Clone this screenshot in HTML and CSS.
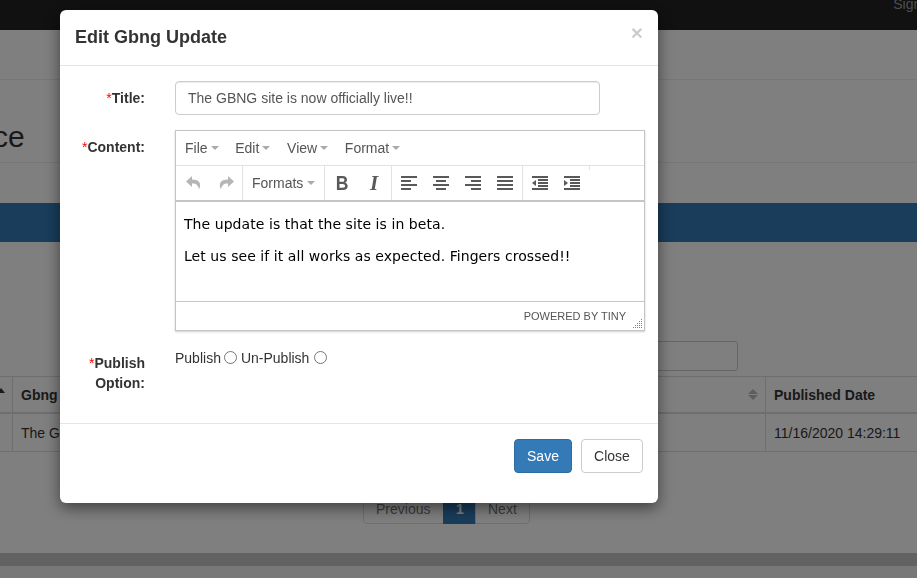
FILE: index.html
```html
<!DOCTYPE html>
<html lang="en">
<head>
<meta charset="utf-8">
<title>Edit Gbng Update</title>
<link rel="stylesheet" href="styles.css">
</head>
<body>
<div class="page">
  <div class="topbar"><a class="signin">Sign in</a></div>
  <div class="subnav"></div>
  <div class="page-head"><h2 class="page-title">ce</h2></div>
  <div class="band"></div>
  <div class="search-row"><div class="search-box"></div></div>
  <div class="tbl">
    <div class="tr tr-head">
      <div class="td td-a"><span class="sort-up"></span></div>
      <div class="td td-b">Gbng Update Title</div>
      <div class="td td-c"><span class="sort-both"></span></div>
      <div class="td td-d">Published Date</div>
    </div>
    <div class="tr">
      <div class="td td-a"></div>
      <div class="td td-b">The GBNG site is now officially live!!</div>
      <div class="td td-c"></div>
      <div class="td td-d">11/16/2020 14:29:11</div>
    </div>
  </div>
  <div class="pager">
    <a class="pg pg-first">Previous</a><a class="pg pg-on">1</a><a class="pg pg-last">Next</a>
  </div>
  <div class="hscroll"></div>
</div>

<div class="backdrop"></div>

<div class="modal">
  <div class="modal-header">
    <h4 class="modal-title">Edit Gbng Update</h4>
    <span class="close-x">×</span>
  </div>
  <div class="modal-body">
    <div class="form-row row-title">
      <label class="lbl"><span class="req">*</span>Title:</label>
      <input class="text-input" type="text" value="The GBNG site is now officially live!!">
    </div>
    <div class="form-row row-content">
      <label class="lbl"><span class="req">*</span>Content:</label>
      <div class="editor">
        <div class="menubar">
          <span class="menu">File<i class="caret"></i></span>
          <span class="menu">Edit<i class="caret"></i></span>
          <span class="menu">View<i class="caret"></i></span>
          <span class="menu">Format<i class="caret"></i></span>
        </div>
        <div class="toolbar">
          <div class="group group-first">
            <span class="tb off"><svg class="ico" viewBox="0 0 16 16"><path d="M6 1 0 6.500 6 12V8.600c3.800-.3 6.200 1.400 7 6 2.600-6 1-10-7-10.200z"/></svg></span>
            <span class="tb off"><svg class="ico" viewBox="0 0 16 16"><path d="M10 1l6 5.500L10 12V8.600c-3.800-.3-6.200 1.400-7 6-2.600-6-1-10 7-10.200z"/></svg></span>
          </div>
          <div class="group group-formats">
            <span class="formats">Formats<i class="caret caret-wide"></i></span>
          </div>
          <div class="group">
            <span class="tb glyph-b">B</span>
            <span class="tb glyph-i">I</span>
          </div>
          <div class="group">
            <span class="tb"><svg class="ico" viewBox="0 0 16 16"><path d="M0 1h16v2H0zM0 5h10v2H0zM0 9h16v2H0zM0 13h10v2H0z"/></svg></span>
            <span class="tb"><svg class="ico" viewBox="0 0 16 16"><path d="M0 1h16v2H0zM3 5h10v2H3zM0 9h16v2H0zM3 13h10v2H3z"/></svg></span>
            <span class="tb"><svg class="ico" viewBox="0 0 16 16"><path d="M0 1h16v2H0zM6 5h10v2H6zM0 9h16v2H0zM6 13h10v2H6z"/></svg></span>
            <span class="tb"><svg class="ico" viewBox="0 0 16 16"><path d="M0 1h16v2H0zM0 5h16v2H0zM0 9h16v2H0zM0 13h16v2H0z"/></svg></span>
          </div>
          <div class="group">
            <span class="tb"><svg class="ico" viewBox="0 0 16 16"><path d="M0 1h16v2H0zM6 4h10v2H6zM6 7h10v2H6zM6 10h10v2H6zM0 13h16v2H0zM4 5v6L0 8z"/></svg></span>
            <span class="tb"><svg class="ico" viewBox="0 0 16 16"><path d="M0 1h16v2H0zM6 4h10v2H6zM6 7h10v2H6zM6 10h10v2H6zM0 13h16v2H0zM0 5v6l4-3z"/></svg></span>
          </div>
          <div class="group group-tick"></div>
        </div>
        <div class="edit-area">
          <p class="edit-p">The update is that the site is in beta.</p>
          <p class="edit-p">Let us see if it all works as expected. Fingers crossed!!</p>
        </div>
        <div class="statusbar">
          <span class="powered">POWERED BY TINY</span>
          <svg class="grip" viewBox="0 0 9 9"><path d="M8 0h1v1H8zM6 2h1v1H6zM8 2h1v1H8zM4 4h1v1H4zM6 4h1v1H6zM8 4h1v1H8zM2 6h1v1H2zM4 6h1v1H4zM6 6h1v1H6zM8 6h1v1H8zM0 8h1v1H0zM2 8h1v1H2zM4 8h1v1H4zM6 8h1v1H6zM8 8h1v1H8z"/></svg>
        </div>
      </div>
    </div>
    <div class="form-row row-publish">
      <label class="lbl"><span class="req">*</span>Publish<br>Option:</label>
      <div class="radios">
        <span>Publish</span><input class="radio" type="radio" name="pub">
        <span>Un-Publish</span><input class="radio radio-last" type="radio" name="pub">
      </div>
    </div>
  </div>
  <div class="modal-footer">
    <button class="btn btn-primary" type="button">Save</button>
    <button class="btn btn-default" type="button">Close</button>
  </div>
</div>
</body>
</html>
```

FILE: styles.css
```css
* { box-sizing: border-box; }
html, body { margin: 0; height: 100%; overflow: hidden; }
body {
  font-family: "Liberation Sans", Arial, sans-serif;
  font-size: 14px;
  line-height: 20px;
  color: #333;
  background: #fff;
}

/* page behind the dialog */
.page { width: 917px; height: 578px; overflow: hidden; display: flex; flex-direction: column; }
.topbar { height: 30px; background: #222; display: flex; justify-content: flex-end; flex: none; }
.signin { color: #9d9d9d; margin-right: -19px; margin-top: -6px; font-size: 14px; }
.subnav { height: 50px; border-bottom: 1px solid #eee; flex: none; }
.page-head { height: 83px; border-bottom: 1px solid #eee; flex: none; display: flex; align-items: flex-start; }
.page-title { font-size: 30px; font-weight: 500; line-height: 33px; margin: 40px 0 0 -7px; }
.band { height: 39px; margin-top: 40px; background: #337ab7; flex: none; }
.search-row { height: 134px; display: flex; justify-content: flex-end; align-items: flex-end; padding: 0 179px 5px 0; flex: none; }
.search-box { width: 220px; height: 30px; border: 1px solid #ccc; border-radius: 3px; }
.tbl { flex: none; border-top: 1px solid #ddd; }
.tr { display: grid; grid-template-columns: 12px 733px 20px 152px; height: 38px; border-bottom: 1px solid #ddd; }
.tr-head { height: 37px; border-bottom-width: 2px; font-weight: 700; }
.td { padding: 0 8px; display: flex; align-items: center; border-left: 1px solid #ddd; white-space: nowrap; overflow: hidden; }
.td-a { border-left: 0; padding: 0; }
.td-c { border-left: 0; padding: 0; }
.sort-up { border: 4px solid transparent; border-top: 0; border-bottom: 5px solid #333; margin: -8px 0 0 -3px; }
.sort-both { position: relative; width: 10px; height: 13px; margin-left: 3px; }
.sort-both::before, .sort-both::after { content: ""; position: absolute; left: 0; border: 5px solid transparent; }
.sort-both::before { top: -4px; border-bottom: 5px solid #bbb; }
.sort-both::after { top: 7px; border-top: 5px solid #bbb; }
.pager { display: flex; justify-content: center; margin: 42px 0 0 -23px; height: 28px; flex: none; }
.pg { height: 30px; padding: 4px 12px; border: 1px solid #ddd; margin-left: -1px; color: #777; }
.pg-first { border-radius: 4px 0 0 4px; width: 81px; }
.pg-on { background: #337ab7; border-color: #337ab7; color: #fff; font-weight: 700; width: 33px; text-align: center; }
.pg-last { border-radius: 0 4px 4px 0; color: #777; width: 55px; }
.hscroll { height: 13px; margin-top: 31px; background: #c4c4c4; flex: none; box-shadow: 0 13px 0 #f1f1f1; }

.backdrop { position: fixed; inset: 0; background: rgba(0, 0, 0, .5); }

/* dialog */
.modal {
  position: fixed;
  left: 60px;
  top: 10px;
  width: 598px;
  height: 493px;
  background: #fff;
  border-radius: 6px;
  box-shadow: 0 5px 15px rgba(0, 0, 0, .5);
  display: flex;
  flex-direction: column;
}
.modal-header { height: 56px; padding: 15px; border-bottom: 1px solid #e5e5e5; display: flex; justify-content: space-between; flex: none; }
.modal-title { margin: 0; font-size: 18px; line-height: 25px; font-weight: 700; color: #333; }
.close-x { font-size: 21px; font-weight: 700; line-height: 16px; color: #000; opacity: .2; }
.modal-body { flex: 1; padding-top: 15px; display: flex; flex-direction: column; }
.form-row { display: grid; grid-template-columns: 85px 470px; column-gap: 30px; }
.row-title { height: 49px; }
.row-content { height: 219px; }
.lbl { font-weight: 700; text-align: right; padding-top: 7px; display: block; }
.row-publish .lbl { padding-top: 4px; width: 85px; }
.req { color: #f00; font-weight: 400; }
.text-input {
  width: 425px;
  height: 34px;
  padding: 6px 12px;
  border: 1px solid #ccc;
  border-radius: 4px;
  font: 14px/20px "Liberation Sans", Arial, sans-serif;
  color: #555;
  box-shadow: inset 0 1px 1px rgba(0, 0, 0, .075);
}

/* rich text editor */
.editor { height: 201px; border: 1px solid #c5c5c5; box-shadow: 0 1px 2px rgba(0,0,0,.2); display: flex; flex-direction: column; }
.menubar { height: 35px; border-bottom: 1px solid #e2e2e2; display: flex; align-items: center; padding-left: 9px; flex: none; color: #555; }
.menu { display: inline-flex; align-items: center; margin-right: 16.700px; }
.caret { width: 0; height: 0; border: 4px solid transparent; border-bottom: 0; border-top-color: #aaa; margin-left: 3px; }
.caret-wide { margin-left: 4px; }
.toolbar { height: 36px; border-bottom: 2px solid #c5c5c5; display: flex; align-items: flex-start; flex: none; }
.group { display: flex; height: 34px; padding: 0 1px; border-left: 1px solid #e2e2e2; }
.group-first { border-left: 0; padding: 0 0 0 2px; width: 66px; }
.group-formats { width: 82px; }
.group-tick { height: 4px; }
.tb { width: 32px; height: 34px; display: flex; align-items: center; justify-content: center; color: #595959; }
.ico { width: 16px; height: 16px; fill: #595959; display: block; flex: none; }
.off .ico { fill: #b5b5b5; }
.formats { display: inline-flex; align-items: center; padding-left: 8px; color: #555; }
.glyph-b { font: 700 20px "Liberation Sans", Arial, sans-serif; transform: scaleX(.88); }
.glyph-i { font: italic 700 21px "Liberation Serif", "Times New Roman", serif; }
.edit-area { flex: 1; padding: 0 8px; font: 14px/19px "DejaVu Sans", Verdana, sans-serif; letter-spacing: .06px; color: #000; }
.edit-p { margin: 13px 0; }
.statusbar { height: 29px; border-top: 1px solid #c5c5c5; display: flex; align-items: center; justify-content: flex-end; position: relative; padding-right: 18px; flex: none; }
.powered { font-size: 11px; color: #555; }
.grip { position: absolute; right: 2px; bottom: 2px; width: 9px; height: 9px; fill: #9a6fb5; }
.radios { display: flex; align-items: flex-start; margin-top: -1px; color: #333; }
.radio { width: 13px; height: 13px; margin: 3px 4px 0 3px; }
.radio-last { margin-left: 5px; }
.modal-footer { height: 80px; border-top: 1px solid #e5e5e5; padding: 15px 15px 0 0; display: flex; justify-content: flex-end; gap: 9px; flex: none; }
.btn { height: 34px; padding: 6px 12px; border: 1px solid transparent; border-radius: 4px; font: 14px/20px "Liberation Sans", Arial, sans-serif; }
.btn-primary { background: #337ab7; border-color: #2e6da4; color: #fff; width: 58px; }
.btn-default { background: #fff; border-color: #ccc; color: #333; width: 62px; }
```
